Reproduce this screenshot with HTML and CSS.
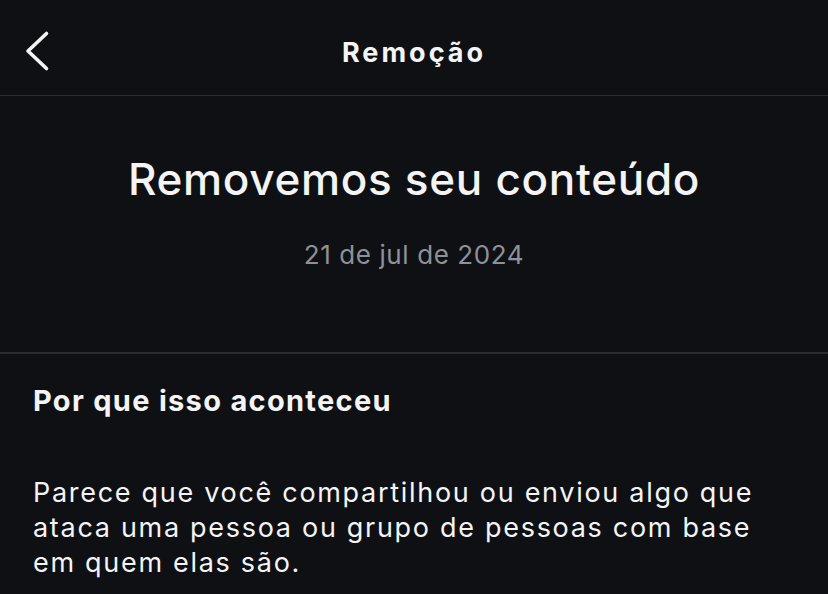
FILE: index.html
```html
<!DOCTYPE html>
<html lang="pt">
<head>
<meta charset="utf-8">
<link rel="stylesheet" href="styles.css">
</head>
<body>
<div class="screen">
  <header class="nav">
    <span class="back">
      <svg width="26" height="42" viewBox="0 0 26 42" fill="none"><path d="M22.5 3.5 L4 21 L22.5 38.5" stroke="#f4f4f5" stroke-width="3.6" stroke-linecap="round" stroke-linejoin="round"/></svg>
    </span>
    <h1 class="nav-title">Remoção</h1>
  </header>
  <section class="hero">
    <h2 class="hero-title">Removemos seu conteúdo</h2>
    <p class="hero-date">21 de jul de 2024</p>
  </section>
  <section class="reason">
    <h3 class="reason-title">Por que isso aconteceu</h3>
    <p class="reason-text">Parece que você compartilhou ou enviou algo que ataca uma pessoa ou grupo de pessoas com base em quem elas são.</p>
  </section>
</div>
</body>
</html>
```
FILE: styles.css
```css
html, body {
  margin: 0;
  padding: 0;
  background: #0e1014;
}
body {
  font-family: Inter, "Noto Sans", sans-serif;
  color: #f4f4f5;
}
.screen {
  width: 828px;
  height: 594px;
  overflow: hidden;
  background: #0e1014;
}
.nav {
  height: 96px;
  display: flex;
  align-items: center;
  justify-content: center;
  position: relative;
  border-bottom: 1px solid #2a2c31;
  box-sizing: border-box;
}
.back {
  position: absolute;
  left: 24px;
  top: 30px;
  display: flex;
}
.nav-title {
  margin: 0;
  font-size: 27px;
  font-weight: 700;
  letter-spacing: 3px;
  line-height: 34px;
  padding-top: 10px;
}
.hero {
  height: 258px;
  display: flex;
  flex-direction: column;
  align-items: center;
  border-bottom: 2px solid #2a2c31;
  box-sizing: border-box;
}
.hero-title {
  margin: 55px 0 0;
  font-size: 44px;
  font-weight: 500;
  letter-spacing: 0.7px;
  line-height: 56px;
}
.hero-date {
  margin: 32px 0 0;
  font-size: 26px;
  color: #8e9197;
  line-height: 32px;
  letter-spacing: 0.6px;
}
.reason {
  padding: 0 33px;
}
.reason-title {
  margin: 29px 0 0;
  font-size: 29px;
  font-weight: 700;
  line-height: 36px;
  letter-spacing: 1.3px;
}
.reason-text {
  margin: 56px 0 0;
  font-size: 27px;
  font-weight: 400;
  line-height: 35px;
  letter-spacing: 1.7px;
}
```
